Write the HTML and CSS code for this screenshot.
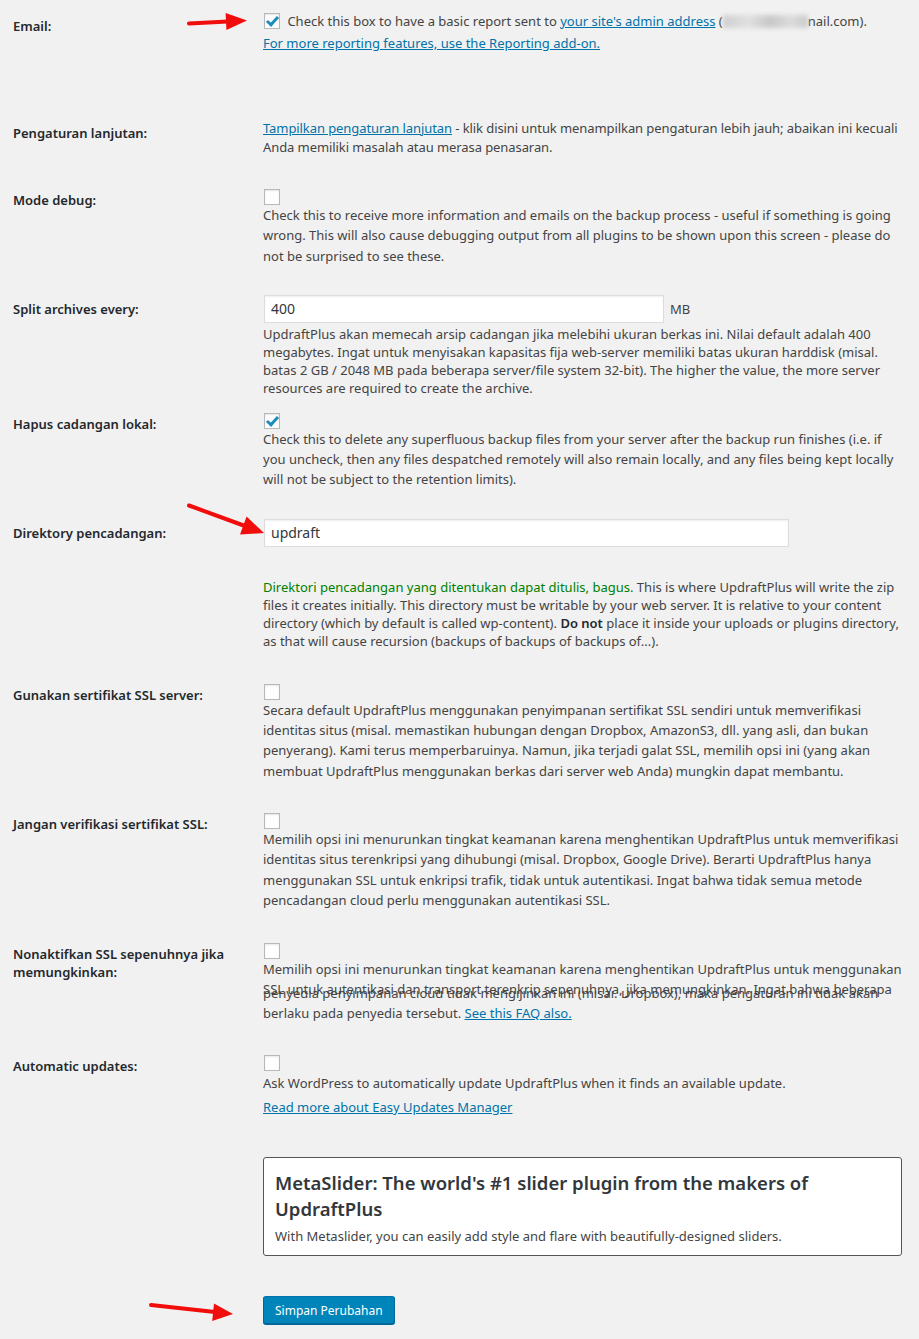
FILE: index.html
```html
<!DOCTYPE html>
<html lang="id">
  <head>
    <meta charset="UTF-8" />
    <meta name="viewport" content="width=device-width, initial-scale=1.0" />
    <title>UpdraftPlus - Pengaturan</title>
    <link rel="stylesheet" href="styles.css">
  </head>
  <body>
    <form class="settings" id="updraftSettings">

      <div class="row row--text row--report">
        <label class="label" for="reportEmail">Email:</label>
        <div class="field">
          <div class="inline-line">
            <input type="checkbox" id="reportEmail" class="check check--inline" checked>
            Check this box to have a basic report sent to <a href="#">your site's admin address</a> (<span class="blurred"></span>nail.com).
          </div>
          <div class="inline-line inline-line--next"><a href="#">For more reporting features, use the Reporting add-on.</a></div>
        </div>
      </div>

      <div class="row row--text">
        <div class="label">Pengaturan lanjutan:</div>
        <div class="field">
          <p class="note"><a href="#">Tampilkan pengaturan lanjutan</a> - klik disini untuk menampilkan pengaturan lebih jauh; abaikan ini kecuali Anda memiliki masalah atau merasa penasaran.</p>
        </div>
      </div>

      <div class="row row--s">
        <label class="label" for="debugMode">Mode debug:</label>
        <div class="field">
          <input type="checkbox" id="debugMode" class="check">
          <p class="desc">Check this to receive more information and emails on the backup process - useful if something is going wrong. This will also cause debugging output from all plugins to be shown upon this screen - please do not be surprised to see these.</p>
        </div>
      </div>

      <div class="row row--input row--xs">
        <label class="label" for="splitEvery">Split archives every:</label>
        <div class="field">
          <div class="input-group">
            <input type="text" id="splitEvery" class="text-input text-input--split" value="400">
            <span>MB</span>
          </div>
          <p class="desc desc--tight">UpdraftPlus akan memecah arsip cadangan jika melebihi ukuran berkas ini. Nilai default adalah 400 megabytes. Ingat untuk menyisakan kapasitas fija web-server memiliki batas ukuran harddisk (misal. batas 2 GB / 2048 MB pada beberapa server/file system 32-bit). The higher the value, the more server resources are required to create the archive.</p>
        </div>
      </div>

      <div class="row row--s">
        <label class="label" for="deleteLocal">Hapus cadangan lokal:</label>
        <div class="field">
          <input type="checkbox" id="deleteLocal" class="check" checked>
          <p class="desc">Check this to delete any superfluous backup files from your server after the backup run finishes (i.e. if you uncheck, then any files despatched remotely will also remain locally, and any files being kept locally will not be subject to the retention limits).</p>
        </div>
      </div>

      <div class="row row--input row--m">
        <label class="label" for="backupDir">Direktory pencadangan:</label>
        <div class="field">
          <input type="text" id="backupDir" class="text-input text-input--dir" value="updraft">
          <p class="desc desc--tight desc--dir"><span class="ok">Direktori pencadangan yang ditentukan dapat ditulis, bagus.</span> This is where UpdraftPlus will write the zip files it creates initially. This directory must be writable by your web server. It is relative to your content directory (which by default is called wp-content). <b>Do not</b> place it inside your uploads or plugins directory, as that will cause recursion (backups of backups of backups of...).</p>
        </div>
      </div>

      <div class="row">
        <label class="label" for="sslServer">Gunakan sertifikat SSL server:</label>
        <div class="field">
          <input type="checkbox" id="sslServer" class="check">
          <p class="desc">Secara default UpdraftPlus menggunakan penyimpanan sertifikat SSL sendiri untuk memverifikasi identitas situs (misal. memastikan hubungan dengan Dropbox, AmazonS3, dll. yang asli, dan bukan penyerang). Kami terus memperbaruinya. Namun, jika terjadi galat SSL, memilih opsi ini (yang akan membuat UpdraftPlus menggunakan berkas dari server web Anda) mungkin dapat membantu.</p>
        </div>
      </div>

      <div class="row row--l">
        <label class="label" for="sslVerify">Jangan verifikasi sertifikat SSL:</label>
        <div class="field">
          <input type="checkbox" id="sslVerify" class="check">
          <p class="desc">Memilih opsi ini menurunkan tingkat keamanan karena menghentikan UpdraftPlus untuk memverifikasi identitas situs terenkripsi yang dihubungi (misal. Dropbox, Google Drive). Berarti UpdraftPlus hanya menggunakan SSL untuk enkripsi trafik, tidak untuk autentikasi. Ingat bahwa tidak semua metode pencadangan cloud perlu menggunakan autentikasi SSL.</p>
        </div>
      </div>

      <div class="row">
        <label class="label" for="sslOff">Nonaktifkan SSL sepenuhnya jika memungkinkan:</label>
        <div class="field">
          <input type="checkbox" id="sslOff" class="check">
          <p class="desc desc--lines">
            <span class="line">Memilih opsi ini menurunkan tingkat keamanan karena menghentikan UpdraftPlus untuk menggunakan</span>
            <span class="line">SSL untuk autentikasi dan transport terenkrip sepenuhnya, jika memungkinkan. Ingat bahwa beberapa</span>
            <span class="line line--cut"><span>penyedia penyimpanan cloud tidak mengijinkan ini (misal. Dropbox), maka pengaturan ini tidak akan</span></span>
            <span class="line">berlaku pada penyedia tersebut. <a href="#">See this FAQ also.</a></span>
          </p>
        </div>
      </div>

      <div class="row row--xl">
        <label class="label" for="autoUpdates">Automatic updates:</label>
        <div class="field">
          <input type="checkbox" id="autoUpdates" class="check">
          <p class="desc desc--update">Ask WordPress to automatically update UpdraftPlus when it finds an available update.</p>
          <p class="desc desc--link"><a href="#">Read more about Easy Updates Manager</a></p>
        </div>
      </div>

      <div class="row row--xl">
        <div></div>
        <div class="field">
          <div class="promo">
            <h3>MetaSlider: The world's #1 slider plugin from the makers of UpdraftPlus</h3>
            <p>With Metaslider, you can easily add style and flare with beautifully-designed sliders.</p>
          </div>
        </div>
      </div>

      <div class="row">
        <div></div>
        <div class="field">
          <button type="submit" class="button-primary">Simpan Perubahan</button>
        </div>
      </div>
    </form>

    <!-- annotation arrows drawn over the screenshot -->
    <svg class="arrows" width="919" height="1339" viewBox="0 0 919 1339" aria-hidden="true">
      <g stroke="#f20d0d" stroke-width="4" stroke-linecap="round" fill="#f20d0d">
        <line x1="189" y1="23.5" x2="228" y2="21.5" />
        <polygon stroke="none" points="247,20.5 225.6,13 226.4,30" />
        <line x1="189" y1="505.5" x2="245" y2="526" />
        <polygon stroke="none" points="264,533 246.6,516.5 240,534.5" />
        <line x1="151" y1="1305" x2="215" y2="1312" />
        <polygon stroke="none" points="233,1314 214,1303.5 212.2,1321" />
      </g>
    </svg>
  </body>
</html>
```

FILE: styles.css
```css
body {
  margin: 0;
  background-color: #f1f1f1;
  color: #444;
  font-family: "Noto Sans", "Open Sans", sans-serif;
  font-size: 13px;
  position: relative;
  min-height: 1339px;
}
a {
  color: #0073aa;
  text-decoration: underline;
}
p {
  margin: 0;
}
.settings {
  padding: 12px 0 0 13px;
}
.row {
  display: grid;
  grid-template-columns: 240px 640px;
  column-gap: 10px;
  margin-bottom: 32px;
}
.row--report {
  margin-bottom: 67px;
}
.row--xs {
  margin-bottom: 16px;
}
.row--s {
  margin-bottom: 29px;
}
.row--m {
  margin-bottom: 34px;
}
.row--l {
  margin-bottom: 33px;
}
.row--xl {
  margin-bottom: 40px;
}
.label {
  display: block;
  padding-top: 2px;
  color: #23282d;
  font-weight: 600;
  font-size: 13px;
  line-height: 18px;
}
.row--text .label,
.row--input .label {
  padding-top: 5px;
}
.field {
  min-width: 0;
}

/* checkboxes */
.check {
  appearance: none;
  -webkit-appearance: none;
  display: block;
  position: relative;
  width: 16px;
  height: 16px;
  margin: 0 0 0 1px;
  border: 1px solid #b4b9be;
  border-radius: 0;
  background: #fff;
  box-shadow: inset 0 1px 2px rgba(0, 0, 0, 0.1);
}
.check:checked::before {
  content: "";
  position: absolute;
  left: 4px;
  top: 0px;
  width: 4px;
  height: 9px;
  border-right: 3px solid #1e8cbe;
  border-bottom: 3px solid #1e8cbe;
  transform: rotate(42deg);
}
.check--inline {
  display: inline-block;
  vertical-align: top;
  margin: 1px 4px 0 1px;
}
.inline-line {
  line-height: 18px;
}
.inline-line--next {
  margin-top: 4px;
}
.blurred {
  display: inline-block;
  width: 85px;
  height: 13px;
  vertical-align: -2px;
  background: linear-gradient(90deg, #cfcfcf, #e0e0e0 30%, #c8c8c8 55%, #dcdcdc 80%, #cbcbcb);
  filter: blur(2px);
}

.note {
  line-height: 19px;
  letter-spacing: -0.08px;
}
.desc {
  line-height: 20.3px;
}
.desc--tight {
  line-height: 18px;
}

/* text inputs */
.input-group {
  display: flex;
  align-items: center;
  gap: 6px;
  height: 28px;
}
.text-input {
  box-sizing: border-box;
  height: 28px;
  margin: 0 0 0 1px;
  padding: 0 6px;
  border: 1px solid #ddd;
  background: #fff;
  box-shadow: inset 0 1px 2px rgba(0, 0, 0, 0.07);
  color: #32373c;
  font-family: inherit;
  font-size: 14px;
  outline: none;
}
.text-input--split {
  width: 400px;
}
.text-input--dir {
  display: block;
  width: 525px;
}
.desc--tight {
  margin-top: 2px;
}
.desc--dir {
  margin-top: 31px;
}
.ok {
  color: #008000;
}
.desc b {
  color: #23282d;
  font-weight: 600;
}

/* the overlapping lines are part of the captured page */
.desc--lines .line {
  display: block;
  white-space: nowrap;
  line-height: 20px;
}
.desc--lines .line--cut {
  height: 12px;
  margin-top: -8px;
  overflow: hidden;
}
.desc--lines .line--cut span {
  display: block;
  margin-top: -8px;
}

.desc--update {
  margin-top: 2px;
  line-height: 20px;
}
.desc--link {
  margin-top: 4px;
  line-height: 20px;
}

/* promo box */
.promo {
  box-sizing: border-box;
  width: 639px;
  padding: 12px 11px 10px;
  border: 1px solid #555;
  border-radius: 3px;
  background: #fff;

  h3 {
    margin: 0;
    color: #32373c;
    font-size: 18.5px;
    font-weight: 600;
    line-height: 26px;
  }

  p {
    margin-top: 5px;
    line-height: 18px;
  }
}

.button-primary {
  height: 28px;
  padding: 0 11px;
  border: 1px solid #0073aa;
  border-color: #0073aa #006799 #006799;
  border-radius: 3px;
  background: #0085ba;
  box-shadow: 0 1px 0 #006799;
  color: #fff;
  font-family: inherit;
  font-size: 12px;
  white-space: nowrap;
}

.arrows {
  position: absolute;
  top: 0;
  left: 0;
  pointer-events: none;
}
```
